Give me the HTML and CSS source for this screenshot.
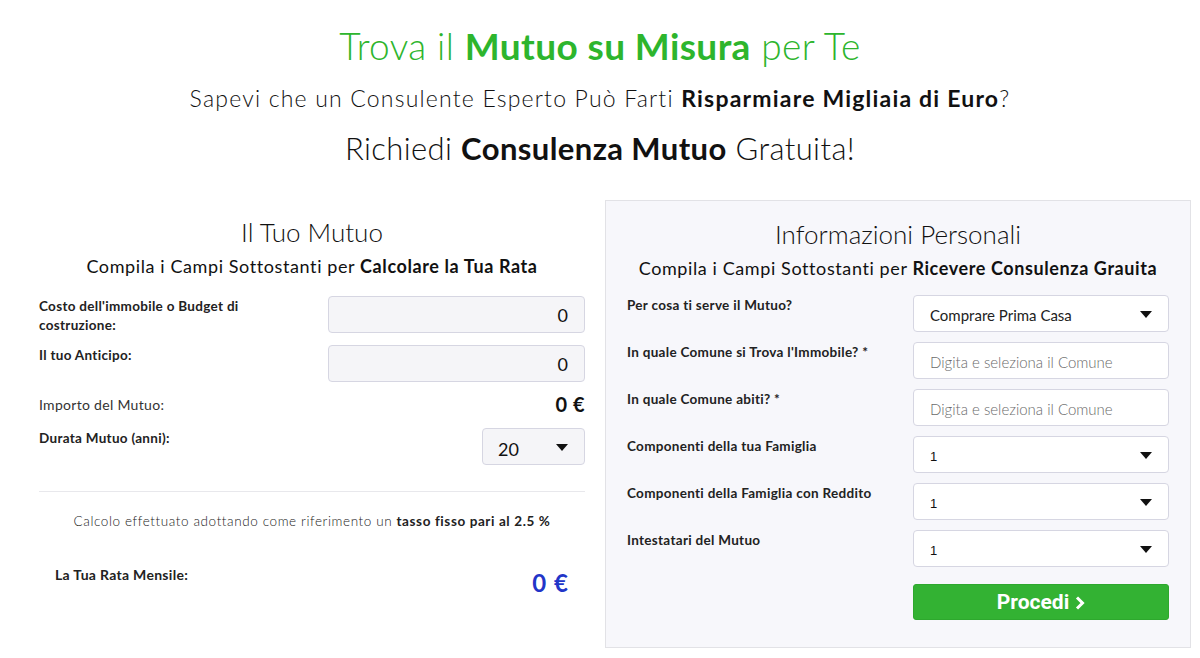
FILE: index.html
```html
<!DOCTYPE html>
<html lang="it">
<head>
<meta charset="utf-8">
<title>Trova il Mutuo su Misura per Te</title>
<link rel="stylesheet" href="styles.css">
</head>
<body>
<header class="hero">
  <h1 class="hero-title">Trova il <b>Mutuo su Misura</b> per Te</h1>
  <p class="hero-sub">Sapevi che un Consulente Esperto Può Farti <b>Risparmiare Migliaia di Euro</b>?</p>
  <p class="hero-cta">Richiedi <b>Consulenza Mutuo</b> Gratuita!</p>
</header>

<main class="columns">
  <section class="calc">
    <h2 class="panel-title">Il Tuo Mutuo</h2>
    <p class="panel-sub">Compila i Campi Sottostanti per <b>Calcolare la Tua Rata</b></p>

    <div class="row">
      <label class="lbl">Costo dell'immobile o Budget di costruzione:</label>
      <input class="field field-num" type="text" value="0">
    </div>
    <div class="row">
      <label class="lbl">Il tuo Anticipo:</label>
      <input class="field field-num" type="text" value="0">
    </div>
    <div class="row row-plain">
      <span class="lbl-light">Importo del Mutuo:</span>
      <span class="amount">0 €</span>
    </div>
    <div class="row row-durata">
      <label class="lbl">Durata Mutuo (anni):</label>
      <div class="select select-small"><span>20</span></div>
    </div>

    <hr class="sep">

    <p class="note">Calcolo effettuato adottando come riferimento un <b>tasso fisso pari al 2.5 %</b></p>

    <div class="rata">
      <span class="rata-lbl">La Tua Rata Mensile:</span>
      <span class="rata-val">0 €</span>
    </div>
  </section>

  <section class="info">
    <h2 class="panel-title">Informazioni Personali</h2>
    <p class="panel-sub">Compila i Campi Sottostanti per <b>Ricevere Consulenza Grauita</b></p>

    <div class="row">
      <label class="lbl">Per cosa ti serve il Mutuo?</label>
      <div class="select select-white"><span class="opt-text">Comprare Prima Casa</span></div>
    </div>
    <div class="row">
      <label class="lbl">In quale Comune si Trova l'Immobile? *</label>
      <input class="field field-white" type="text" placeholder="Digita e seleziona il Comune">
    </div>
    <div class="row">
      <label class="lbl">In quale Comune abiti? *</label>
      <input class="field field-white" type="text" placeholder="Digita e seleziona il Comune">
    </div>
    <div class="row">
      <label class="lbl">Componenti della tua Famiglia</label>
      <div class="select select-white"><span class="opt-num">1</span></div>
    </div>
    <div class="row">
      <label class="lbl">Componenti della Famiglia con Reddito</label>
      <div class="select select-white"><span class="opt-num">1</span></div>
    </div>
    <div class="row">
      <label class="lbl">Intestatari del Mutuo</label>
      <div class="select select-white"><span class="opt-num">1</span></div>
    </div>
    <div class="row row-btn">
      <span></span>
      <button class="btn" type="button">Procedi <svg class="chev" viewBox="0 0 10 14" width="10" height="14"><path d="M2 1.5 L7.5 7 L2 12.5" fill="none" stroke="#fff" stroke-width="3" stroke-linejoin="miter"/></svg></button>
    </div>
  </section>
</main>
</body>
</html>
```

FILE: styles.css
```css
* { box-sizing: border-box; }
html, body { margin: 0; padding: 0; background: #fff; }
body {
  font-family: "Lato", "Open Sans", sans-serif;
  color: #222;
  width: 1200px;
  height: 658px;
  overflow: hidden;
}
b { font-weight: 700; }

.hero { text-align: center; padding-top: 24px; }
.hero-title {
  margin: 0;
  font-size: 37px;
  font-weight: 300;
  color: #2db52d;
  line-height: 44px;
  letter-spacing: 0.4px;
}
.hero-sub {
  margin: 15px 0 0;
  font-size: 23px;
  font-weight: 300;
  line-height: 30px;
  color: #111;
  letter-spacing: 1.2px;
}
.hero-cta {
  margin: 16px 0 0;
  font-size: 31px;
  font-weight: 300;
  line-height: 38px;
  color: #111;
  letter-spacing: 0.4px;
}

.columns {
  display: flex;
  align-items: flex-start;
  gap: 20px;
  margin-top: 33px;
  padding-left: 39px;
}

.calc { width: 546px; padding-top: 16px; }
.info {
  width: 586px;
  height: 448px;
  background: #f7f7fb;
  border: 1px solid #e2e2e6;
  padding: 17px 21px 0;
}

.panel-title {
  margin: 0;
  text-align: center;
  font-size: 26px;
  font-weight: 300;
  line-height: 32px;
  color: #111;
}
.panel-sub {
  margin: 6px 0 0;
  text-align: center;
  font-size: 18px;
  font-weight: 400;
  line-height: 24px;
  color: #111;
  letter-spacing: 0.6px;
}
.calc .panel-sub { margin-bottom: 18px; }
.info .panel-sub { margin-bottom: 15px; }

.row {
  display: grid;
  grid-template-columns: 1fr 257px;
  align-items: start;
  margin-bottom: 10px;
}
.info .row { grid-template-columns: 1fr 256px; }

.lbl {
  font-size: 13.5px;
  font-weight: 700;
  line-height: 19px;
  color: #222;
  padding-top: 1px;
  padding-right: 40px;
  letter-spacing: 0.3px;
}

.field {
  height: 37px;
  width: 100%;
  border: 1px solid #d6d6e2;
  border-radius: 4px;
  font-family: inherit;
  font-size: 18px;
  color: #222;
  padding: 0 20px;
  outline: none;
}
.field-num { background: #f5f5f8; text-align: right; font-weight: 400; padding: 1px 16px 0; color: #111; }
.field-white { background: #fff; font-size: 15px; font-weight: 300; padding: 2px 16px 0; }
.field-white::placeholder { color: #6a6a6a; }

.row-plain { align-items: center; margin-top: 4px; margin-bottom: 12px; }
.lbl-light { font-size: 14px; font-weight: 400; color: #333; letter-spacing: 0.3px; }
.amount { font-size: 20px; font-weight: 700; text-align: right; color: #111; letter-spacing: 0.5px; }

.row-durata { grid-template-columns: 1fr 103px; }

.select {
  position: relative;
  height: 37px;
  border: 1px solid #d6d6e2;
  border-radius: 4px;
  display: flex;
  align-items: center;
  padding: 0 16px;
}
.select::after {
  content: "";
  position: absolute;
  right: 16px;
  top: 15px;
  border-left: 6px solid transparent;
  border-right: 6px solid transparent;
  border-top: 7px solid #111;
}
.select-small { background: #f5f5f8; font-size: 18px; font-weight: 400; color: #111; padding-left: 15px; padding-top: 4px; }
.select-white { background: #fff; }
.opt-text { font-size: 15px; font-weight: 400; color: #222; padding-top: 2px; }
.opt-num { font-family: "Liberation Sans", Arial, sans-serif; font-size: 13px; color: #111; padding-top: 3px; }

.sep {
  border: 0;
  border-top: 1px solid #e8e8ec;
  margin: 26px 0 0;
}
.note {
  margin: 21px 0 0;
  text-align: center;
  font-size: 13.5px;
  font-weight: 300;
  color: #222;
  letter-spacing: 0.6px;
}
.note b { font-weight: 700; }

.rata {
  display: flex;
  justify-content: space-between;
  align-items: flex-start;
  margin-top: 37px;
  padding: 0 16px 0 16px;
}
.rata-lbl { font-size: 14px; font-weight: 700; color: #222; letter-spacing: 0.3px; }
.rata-val { font-size: 24px; font-weight: 700; color: #2235c8; margin-top: 2px; letter-spacing: 1px; }

.row-btn { margin-top: 17px; margin-bottom: 0; }
.btn {
  height: 36px;
  width: 100%;
  background: #33b233;
  border: 1px solid #2ea82e;
  border-radius: 3px;
  color: #fff;
  font-family: "Roboto", sans-serif;
  font-size: 21px;
  font-weight: 700;
  display: flex;
  align-items: center;
  justify-content: center;
  gap: 6px;
  padding: 0;
}
.chev { margin-top: 2px; }
```
